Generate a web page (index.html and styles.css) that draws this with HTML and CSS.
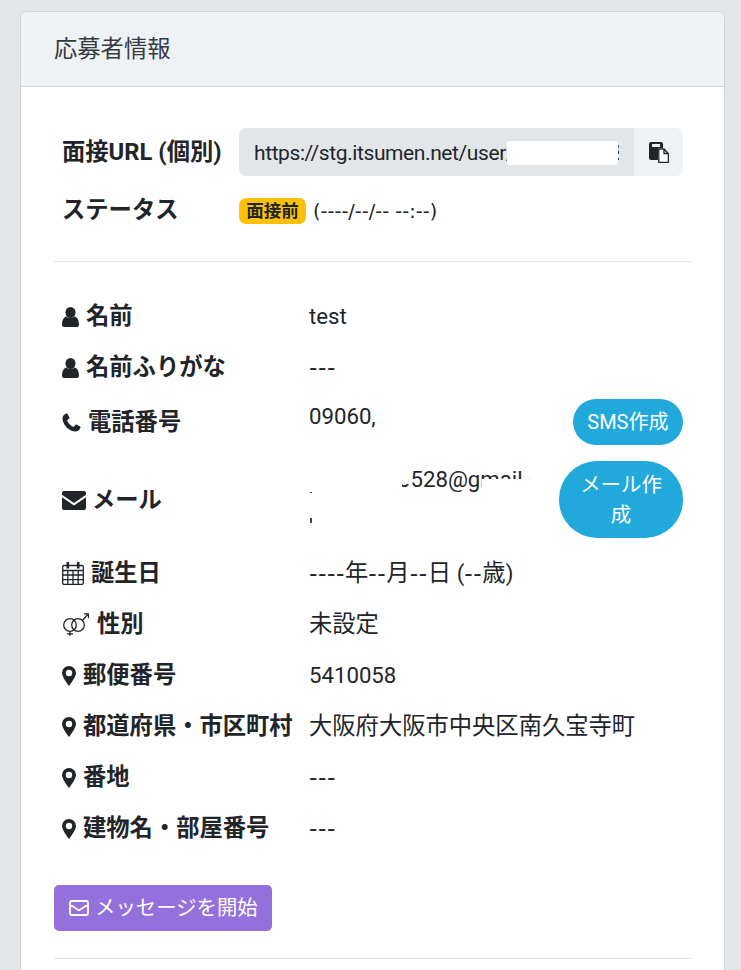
FILE: index.html
```html
<!DOCTYPE html>
<html lang="ja">
<head>
<meta charset="utf-8">
<title>応募者情報</title>
<link rel="stylesheet" href="styles.css">
</head>
<body>
<main class="card">
  <header class="card-header">応募者情報</header>
  <div class="card-body">
    <section class="top">
      <div class="top-row url-row">
        <div class="top-label">面接<span class="lat">URL (</span>個別<span class="lat">)</span></div>
        <div class="input-group">
          <div class="input lat"><div class="input-text">https://stg.itsumen.net/user/xxxxxxxxxx8<span class="blot blot-url"></span></div></div>
          <button class="copy" aria-label="copy">
            <svg viewBox="0 0 20 21" width="20" height="21"><path class="dark" d="M2 0h10a2 2 0 0 1 2 2v4h-4a1 1 0 0 0-1 1v11H2a2 2 0 0 1-2-2V2a2 2 0 0 1 2-2z"/><path class="cutout" d="M3 2h8v3H3z"/><path class="outline" d="M9.800 7H15l4.300 4.500v8.800H9.800zM15 7v4.500h4.300"/></svg>
          </button>
        </div>
      </div>
      <div class="top-row status-row">
        <div class="top-label">ステータス</div>
        <div class="status"><span class="badge">面接前</span><span class="stamp">(----/--/-- --:--)</span></div>
      </div>
    </section>
    <hr class="rule">
    <dl class="info">
      <div class="row"><dt><svg class="ico ico-user" viewBox="0 0 17 20" width="17" height="20"><ellipse cx="8.500" cy="5.500" rx="5" ry="5.500"/><path d="M0 17.800c0-4 1.500-7.800 4.500-8.300 1 1 2.500 1.600 4 1.600s3-.6 4-1.600c3 .5 4.500 4.300 4.500 8.300 0 1.300-1 2.200-2 2.200H2c-1 0-2-.9-2-2.200z"/></svg>名前</dt><dd><span class="lat">test</span></dd></div>
      <div class="row"><dt><svg class="ico ico-user" viewBox="0 0 17 20" width="17" height="20"><ellipse cx="8.500" cy="5.500" rx="5" ry="5.500"/><path d="M0 17.800c0-4 1.500-7.800 4.500-8.300 1 1 2.500 1.600 4 1.600s3-.6 4-1.600c3 .5 4.500 4.300 4.500 8.300 0 1.300-1 2.200-2 2.200H2c-1 0-2-.9-2-2.200z"/></svg>名前ふりがな</dt><dd><span class="dash-line"><span class="dash">---</span></span></dd></div>
      <div class="row row-phone"><dt><svg class="ico ico-phone" viewBox="0 0 19 19" width="19" height="19"><path d="M4.500.5C3 1 .5 2.500.5 5c0 7 6.500 13.500 13.500 13.500 2.500 0 4-2.500 4.500-4 .1-.4 0-.7-.4-.9l-3.600-2c-.4-.2-.7-.1-1 .2l-1.500 1.800c-.3.3-.7.3-1 .2-2.500-1.200-4.500-3.200-5.700-5.700-.1-.3-.1-.7.2-1l1.800-1.500c.3-.3.4-.6.2-1l-2-3.600c-.2-.4-.5-.5-.9-.4z"/></svg>電話番号</dt><dd><span class="lat">09060,</span><a class="pill">SMS作成</a></dd></div>
      <div class="row row-mail"><dt><svg class="ico ico-mail" viewBox="0 0 24 19" width="24" height="19"><path d="M2 0h20a2 2 0 0 1 2 2v1.800l-12 8.200L0 3.800V2a2 2 0 0 1 2-2z"/><path d="M0 6.300V17a2 2 0 0 0 2 2h20a2 2 0 0 0 2-2V6.300l-12 8.200z"/></svg>メール</dt><dd><span class="mail-text lat"><span class="mail-prefix"></span>0528@gmail.com<span class="blot blot-mail-a"></span><span class="blot blot-mail-a2"></span><span class="blot blot-mail-b"></span><span class="blot blot-mail-c"></span><span class="speck speck-a"></span><span class="speck speck-b"></span></span><a class="pill">メール作成</a></dd></div>
      <div class="row row-birth"><dt><svg class="ico ico-cal" viewBox="0 0 22 23" width="22" height="23"><path class="line" d="M2 3.500h18a1.300 1.300 0 0 1 1.300 1.300v16.200a1.300 1.300 0 0 1-1.300 1.300H2A1.300 1.300 0 0 1 .7 21V4.800A1.300 1.300 0 0 1 2 3.500zM.7 8.500h20.600M.7 13h20.600M.7 17.700h20.600M5.800 8.500v14M11 8.500v14M16.200 8.500v14"/><path d="M4.500 0h2.600v6.500H4.500zM14.900 0h2.600v6.500h-2.600z"/></svg>誕生日</dt><dd><span class="dash-line"><span class="dash">----</span>年<span class="dash">--</span>月<span class="dash">--</span>日 <span class="lat">(</span><span class="dash">--</span>歳<span class="lat">)</span></span></dd></div>
      <div class="row"><dt><svg class="ico ico-gender" viewBox="0 0 26 23" width="26" height="23"><circle class="line" cx="7" cy="12" r="6.300"/><circle class="line" cx="15" cy="12" r="6.300"/><path class="line" d="M7 18.300V23M4 20.800h6M19.500 7.500 25.300.8M21 .8h4.500V5.300"/></svg>性別</dt><dd><span>未設定</span></dd></div>
      <div class="row"><dt><svg class="ico ico-pin" viewBox="0 0 14 20" width="14" height="20"><path fill-rule="evenodd" d="M7 0a7 7 0 0 1 7 7c0 3-4 9-7 13-3-4-7-10-7-13a7 7 0 0 1 7-7zm0 3.800a3.200 3.200 0 1 0 0 6.400 3.200 3.200 0 0 0 0-6.400z"/></svg>郵便番号</dt><dd><span class="lat">5410058</span></dd></div>
      <div class="row"><dt><svg class="ico ico-pin" viewBox="0 0 14 20" width="14" height="20"><path fill-rule="evenodd" d="M7 0a7 7 0 0 1 7 7c0 3-4 9-7 13-3-4-7-10-7-13a7 7 0 0 1 7-7zm0 3.800a3.200 3.200 0 1 0 0 6.400 3.200 3.200 0 0 0 0-6.400z"/></svg>都道府県・市区町村</dt><dd><span>大阪府大阪市中央区南久宝寺町</span></dd></div>
      <div class="row"><dt><svg class="ico ico-pin" viewBox="0 0 14 20" width="14" height="20"><path fill-rule="evenodd" d="M7 0a7 7 0 0 1 7 7c0 3-4 9-7 13-3-4-7-10-7-13a7 7 0 0 1 7-7zm0 3.800a3.200 3.200 0 1 0 0 6.400 3.200 3.200 0 0 0 0-6.400z"/></svg>番地</dt><dd><span class="dash-line"><span class="dash">---</span></span></dd></div>
      <div class="row"><dt><svg class="ico ico-pin" viewBox="0 0 14 20" width="14" height="20"><path fill-rule="evenodd" d="M7 0a7 7 0 0 1 7 7c0 3-4 9-7 13-3-4-7-10-7-13a7 7 0 0 1 7-7zm0 3.800a3.200 3.200 0 1 0 0 6.400 3.200 3.200 0 0 0 0-6.400z"/></svg>建物名・部屋番号</dt><dd><span class="dash-line"><span class="dash">---</span></span></dd></div>
    </dl>
    <a class="msg-btn"><svg viewBox="0 0 20 16" width="20" height="16"><path class="msg-line" d="M2.500 1h15A1.500 1.500 0 0 1 19 2.500v11a1.500 1.500 0 0 1-1.500 1.500h-15A1.500 1.500 0 0 1 1 13.500v-11A1.500 1.500 0 0 1 2.500 1zM1 4.500 10 10.500 19 4.500"/></svg>メッセージを開始</a>
    <hr class="rule rule-bottom">
  </div>
</main>
</body>
</html>
```
FILE: styles.css
```css
* { box-sizing: border-box; }
html, body { margin: 0; height: 970px; overflow: hidden; }
body {
  background: #e3e5e7;
  padding: 11px 16px 0 20px;
  font-family: Roboto, "Noto Sans CJK JP", sans-serif;
  font-size: 23.3px;
  line-height: 35px;
  color: #212529;
}
.lat { font-size: 22.2px; }
.dash-line { display: block; height: 35px; }
.dash { font-family: "DejaVu Sans", sans-serif; font-size: 23.3px; letter-spacing: .6px; line-height: 0; }
.card {
  background: #fff;
  border: 1px solid #ced4da;
  border-radius: 7px;
  height: 1100px;
}
.card-header {
  height: 75px;
  padding: 20px 33px;
  background: #eff2f5;
  border-bottom: 1px solid #ced4da;
  border-radius: 6px 6px 0 0;
  color: #343a40;
}
.card-body { padding: 41px 33px 0; }
.top { padding: 0 8px; }
.top-row { display: flex; align-items: center; }
.top-label { width: 177px; flex: none; font-weight: 700; white-space: nowrap; }
.url-row { height: 48px; margin-bottom: 15px; }
.top-label .lat { font-size: 23.8px; }
.input-group { display: flex; width: 444px; height: 48px; }
.input {
  flex: 1;
  min-width: 0;
  padding: 7px 15px 5px;
  background: #e3e6e9;
  border-radius: 7px 0 0 7px;
  line-height: 36px;
  font-size: 21px;
  letter-spacing: -.4px;
}
.input-text { position: relative; overflow: hidden; white-space: nowrap; }
.copy {
  width: 49px;
  flex: none;
  border: 0;
  padding: 0;
  background: #eff2f5;
  border-radius: 0 7px 7px 0;
  display: flex;
  align-items: center;
  justify-content: center;
}
.dark { fill: #212529; }
.outline { fill: #fff; stroke: #212529; stroke-width: 1.300; }
.cutout { fill: #eff2f5; }
.status-row { height: 38px; }
.status { display: flex; align-items: center; margin-top: 2px; }
.badge {
  background: #ffc107;
  color: #212529;
  border-radius: 7px;
  font-size: 17.5px;
  font-weight: 700;
  line-height: 26px;
  width: 67px;
  text-align: center;
  white-space: nowrap;
}
.stamp { font-family: "DejaVu Sans", sans-serif; font-size: 19.300px; margin-left: 7px; margin-top: 2px; line-height: 28px; white-space: nowrap; }
.rule { margin: 0; border: 0; border-top: 1px solid #e3e5e7; }
.top + .rule { margin-top: 32px; }
.info { margin: 37px 0 0; padding: 0 8px; }
.row { display: flex; margin-bottom: 16px; height: 35px; }
dt { width: 247px; flex: none; font-weight: 700; display: flex; align-items: center; white-space: nowrap; }
dd { margin: 0; flex: 1; display: flex; min-width: 0; white-space: nowrap; }
.ico { fill: #212529; flex: none; }
.ico-user { margin-right: 7px; }
.ico-phone { margin-right: 7px; }
.ico-mail { margin-right: 6px; }
.ico-cal { margin-right: 7px; }
.ico-gender { margin-left: 1px; margin-right: 8px; }
.ico-pin { margin-right: 7px; }
.line { fill: none; stroke: #212529; stroke-width: 1.300; }
.row-phone { height: 46px; margin-top: -2px; }
.row-phone dd { justify-content: space-between; align-items: flex-start; }
.row-mail { height: 77px; margin-bottom: 18px; }
.row-mail dt { padding-top: 2px; }
.row-mail dd { justify-content: space-between; }
.pill {
  display: block;
  flex: none;
  background: #22a9db;
  color: #fff;
  font-size: 20.4px;
  line-height: 30px;
  border-radius: 24px;
  text-align: center;
  white-space: normal;
}
.row-phone .pill { padding: 8px 14.500px; white-space: nowrap; font-size: 20px; }
.row-mail .pill { width: 124px; padding: 9px 20px 7px; border-radius: 38px; }
.mail-text { position: relative; display: block; width: 250px; height: 77px; padding-top: 1px; overflow: hidden; }
.mail-prefix { display: inline-block; width: 89px; }
.blot { position: absolute; background: #fff; }
.blot-url { left: 253px; top: 6px; right: 1px; height: 24px; border-radius: 3px; }
.blot-mail-a { left: 0; top: 0; width: 93px; height: 77px; }
.blot-mail-a2 { left: 93px; top: 0; width: 8px; height: 23px; }
.blot-mail-b { left: 173px; top: 18px; right: 0; height: 40px; }
.blot-mail-c { left: 221px; top: 0; right: 0; height: 40px; }
.speck { position: absolute; left: 1px; width: 2px; background: #444; }
.speck-a { top: 31px; height: 1px; }
.speck-b { top: 57px; height: 5px; }
.msg-btn {
  display: inline-flex;
  align-items: center;
  gap: 6px;
  height: 46px;
  padding: 0 14px 0 15px;
  margin-top: 23px;
  background: #9370db;
  color: #fff;
  border-radius: 5px;
  font-size: 20.4px;
}
.msg-line { fill: none; stroke: #fff; stroke-width: 1.800; }
.rule-bottom { margin-top: 27px; }
```
